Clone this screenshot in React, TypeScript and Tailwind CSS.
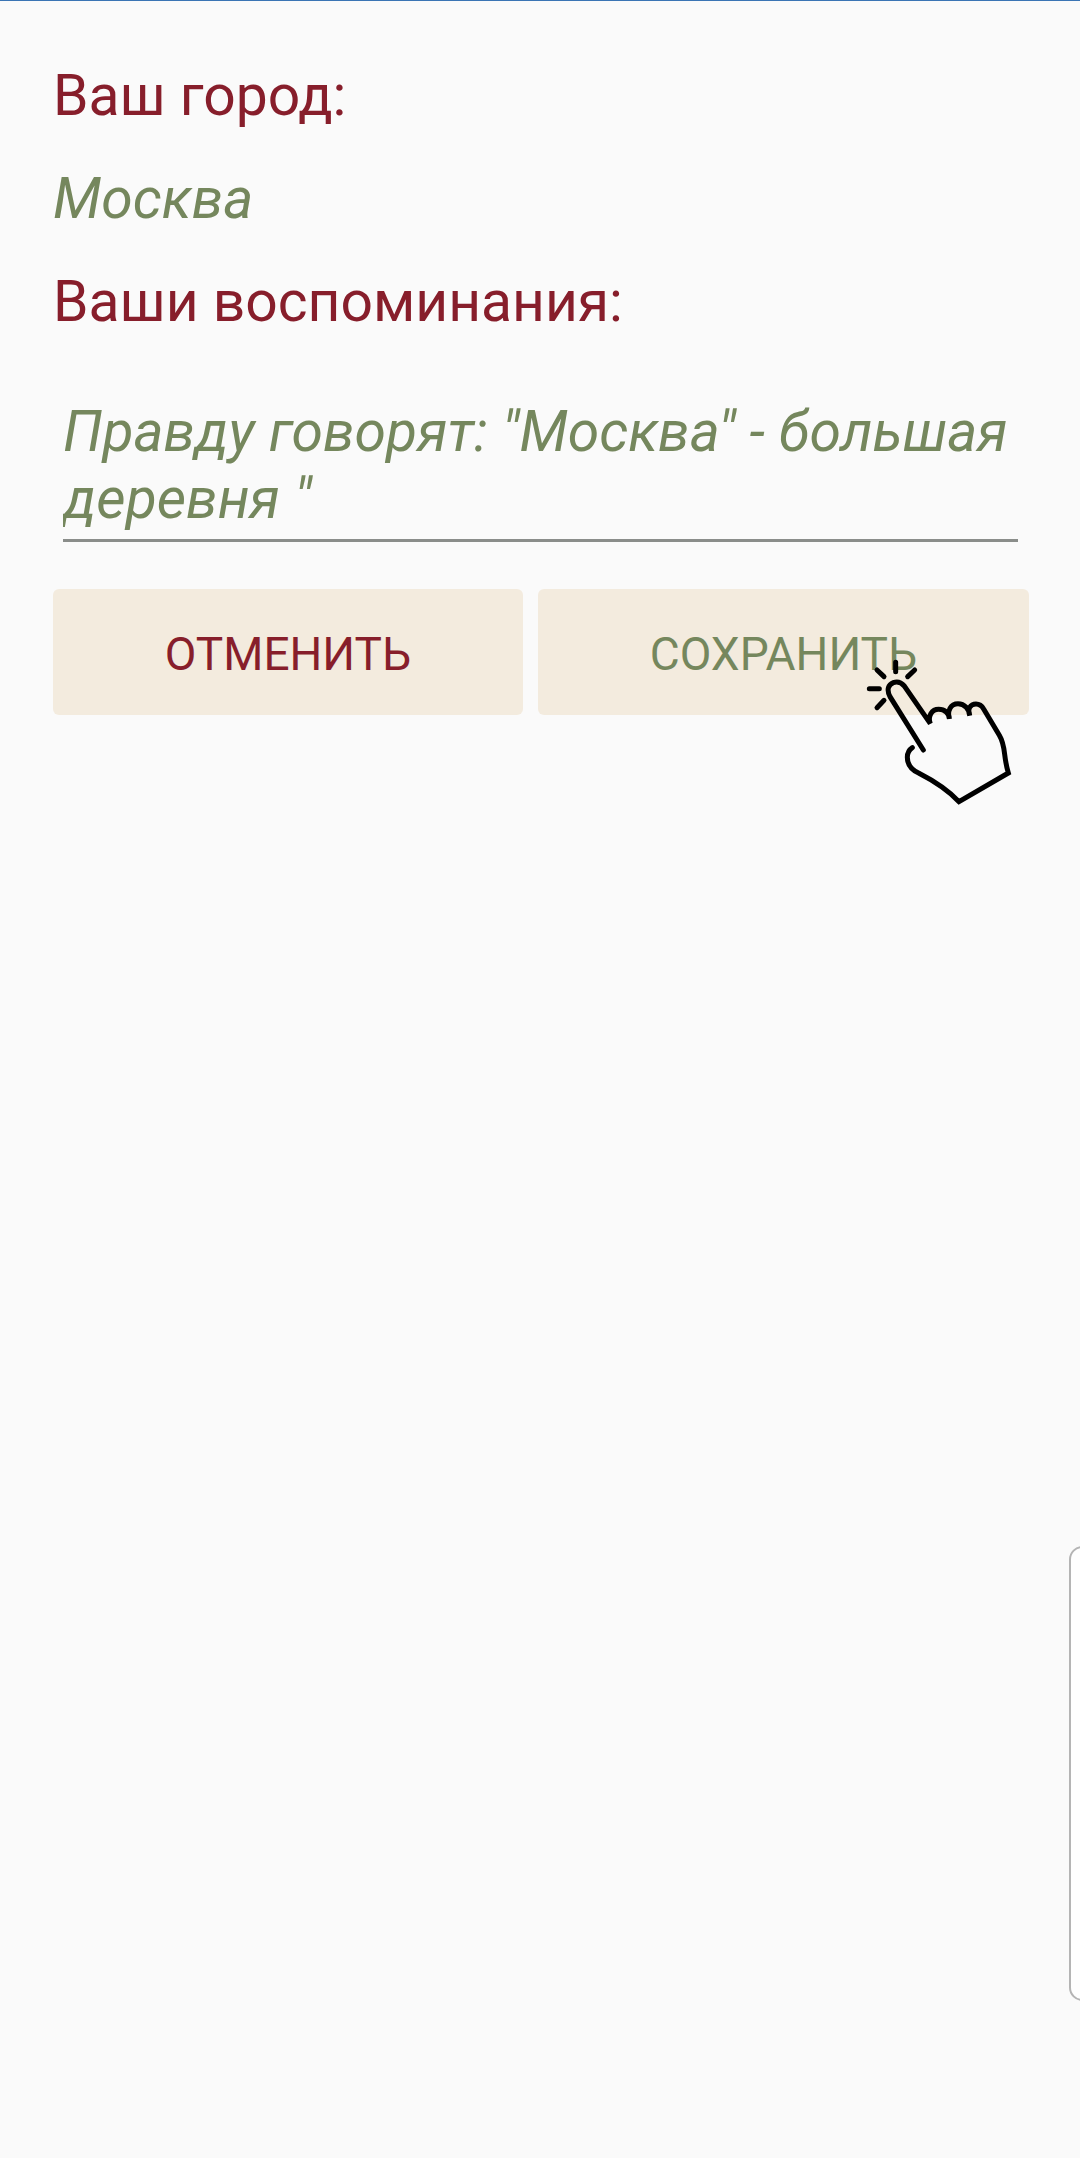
import { useState } from "react";

function TapPointer() {
  return (
    <svg
      viewBox="0 0 600 600"
      aria-hidden="true"
      className="pointer-events-none absolute top-[41px] -right-[11px] size-[200px]"
      fill="none"
      stroke="#000"
      strokeWidth="15"
      strokeLinecap="round"
      strokeLinejoin="miter"
    >
      <path d="M167 97V125M111 120L132 140M88 176H118M132 211L111 233M203 140L224 120" />
      <path d="M250 360L150 200C139 179 145 164 160 158C174 153 186 160 193 168L271 281C262 258 276 238 296 238C314 238 328 250 328 266C321 242 332 221 354 221C374 221 388 238 389 256C382 238 390 222 408 222C420 222 426 228 431 237L478 316C498 349 489 376 505 429L357 515C325 482 294 459 237 430C211 418 202 403 202 382C202 366 208 359 217 353" />
    </svg>
  );
}

export default function App() {
  const [city] = useState("Москва");
  const [memory, setMemory] = useState('Правду говорят: "Москва" - большая деревня "');

  return (
    <main className="relative min-h-screen overflow-hidden border-t border-[#3a74b4] bg-[#fafafa] pt-[61px] pr-[51px] pl-[53px] font-[Roboto,sans-serif] text-[57px] leading-[67px] text-[#871e2b]">
      <form onSubmit={(e) => e.preventDefault()}>
        <div className="flex flex-col gap-9">
          <h2>Ваш город:</h2>
          <p className="text-[#75875d] italic">{city}</p>
          <label htmlFor="memory">Ваши воспоминания:</label>
        </div>
        <div className="mt-[63px] pr-[11px] pl-[10px]">
          <textarea
            id="memory"
            rows={2}
            value={memory}
            onChange={(e) => setMemory(e.target.value)}
            className="block w-full resize-none overflow-hidden border-b-3 border-[#8a8d8a] bg-transparent pb-[7px] text-[#75875d] italic outline-none"
          />
        </div>
        <div className="mt-[47px] flex gap-[15px] text-[46px] leading-[56px]">
          <button type="button" className="h-[126px] flex-auto rounded-md bg-[#f3ebde] pt-1">
            ОТМЕНИТЬ
          </button>
          <button type="submit" className="relative h-[126px] flex-auto rounded-md bg-[#f3ebde] pt-1 text-[#75875d]">
            СОХРАНИТЬ
            <TapPointer />
          </button>
        </div>
      </form>
      <aside className="absolute top-[1545px] -right-4 h-[455px] w-[27px] rounded-[14px] border-2 border-[#b4b4b4] bg-[#fefefe]" />
    </main>
  );
}
